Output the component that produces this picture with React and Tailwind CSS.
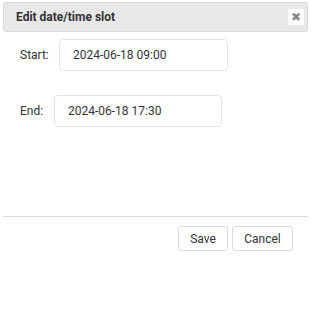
export default function App() {
    return (
        <div className="w-[311px] h-[309px] bg-white px-[3px] pt-[2px]" style={{ fontFamily: "Roboto, 'Liberation Sans', sans-serif" }}>
            <div className="flex items-center justify-between h-[30px] bg-[#e8e8e8] border border-[#dadada] rounded-[3px] pl-[12px] pr-[3px]">
                <span className="text-[12px] font-bold text-[#333]">Edit date/time slot</span>
                <button className="w-[16px] h-[16px] bg-white rounded-[2px] flex items-center justify-center text-[#888] text-[12px] leading-none">✖</button>
            </div>

            <div className="flex items-center pl-[17px] mt-[7px]">
                <span className="text-[12px] text-[#333] w-[39px]">Start:</span>
                <div className="w-[169px] h-[32px] border border-[#e3e3e3] rounded-[4px] flex items-center pl-[13px] text-[12px] text-[#333]">
                    2024-06-18 09:00
                </div>
            </div>

            <div className="flex items-center pl-[17px] mt-[24px]">
                <span className="text-[12px] text-[#333] w-[34px]">End:</span>
                <div className="w-[168px] h-[32px] border border-[#e3e3e3] rounded-[4px] flex items-center pl-[13px] text-[12px] text-[#333]">
                    2024-06-18 17:30
                </div>
            </div>

            <div className="mt-[89px] border-t border-[#dcdcdc]"></div>

            <div className="flex justify-end gap-[4px] pr-[15px] mt-[9px]">
                <button className="w-[50px] h-[25px] border border-[#dcdcdc] rounded-[3px] text-[12px] text-[#333] bg-white">Save</button>
                <button className="w-[61px] h-[25px] border border-[#dcdcdc] rounded-[3px] text-[12px] text-[#333] bg-white">Cancel</button>
            </div>
        </div>
    );
}
